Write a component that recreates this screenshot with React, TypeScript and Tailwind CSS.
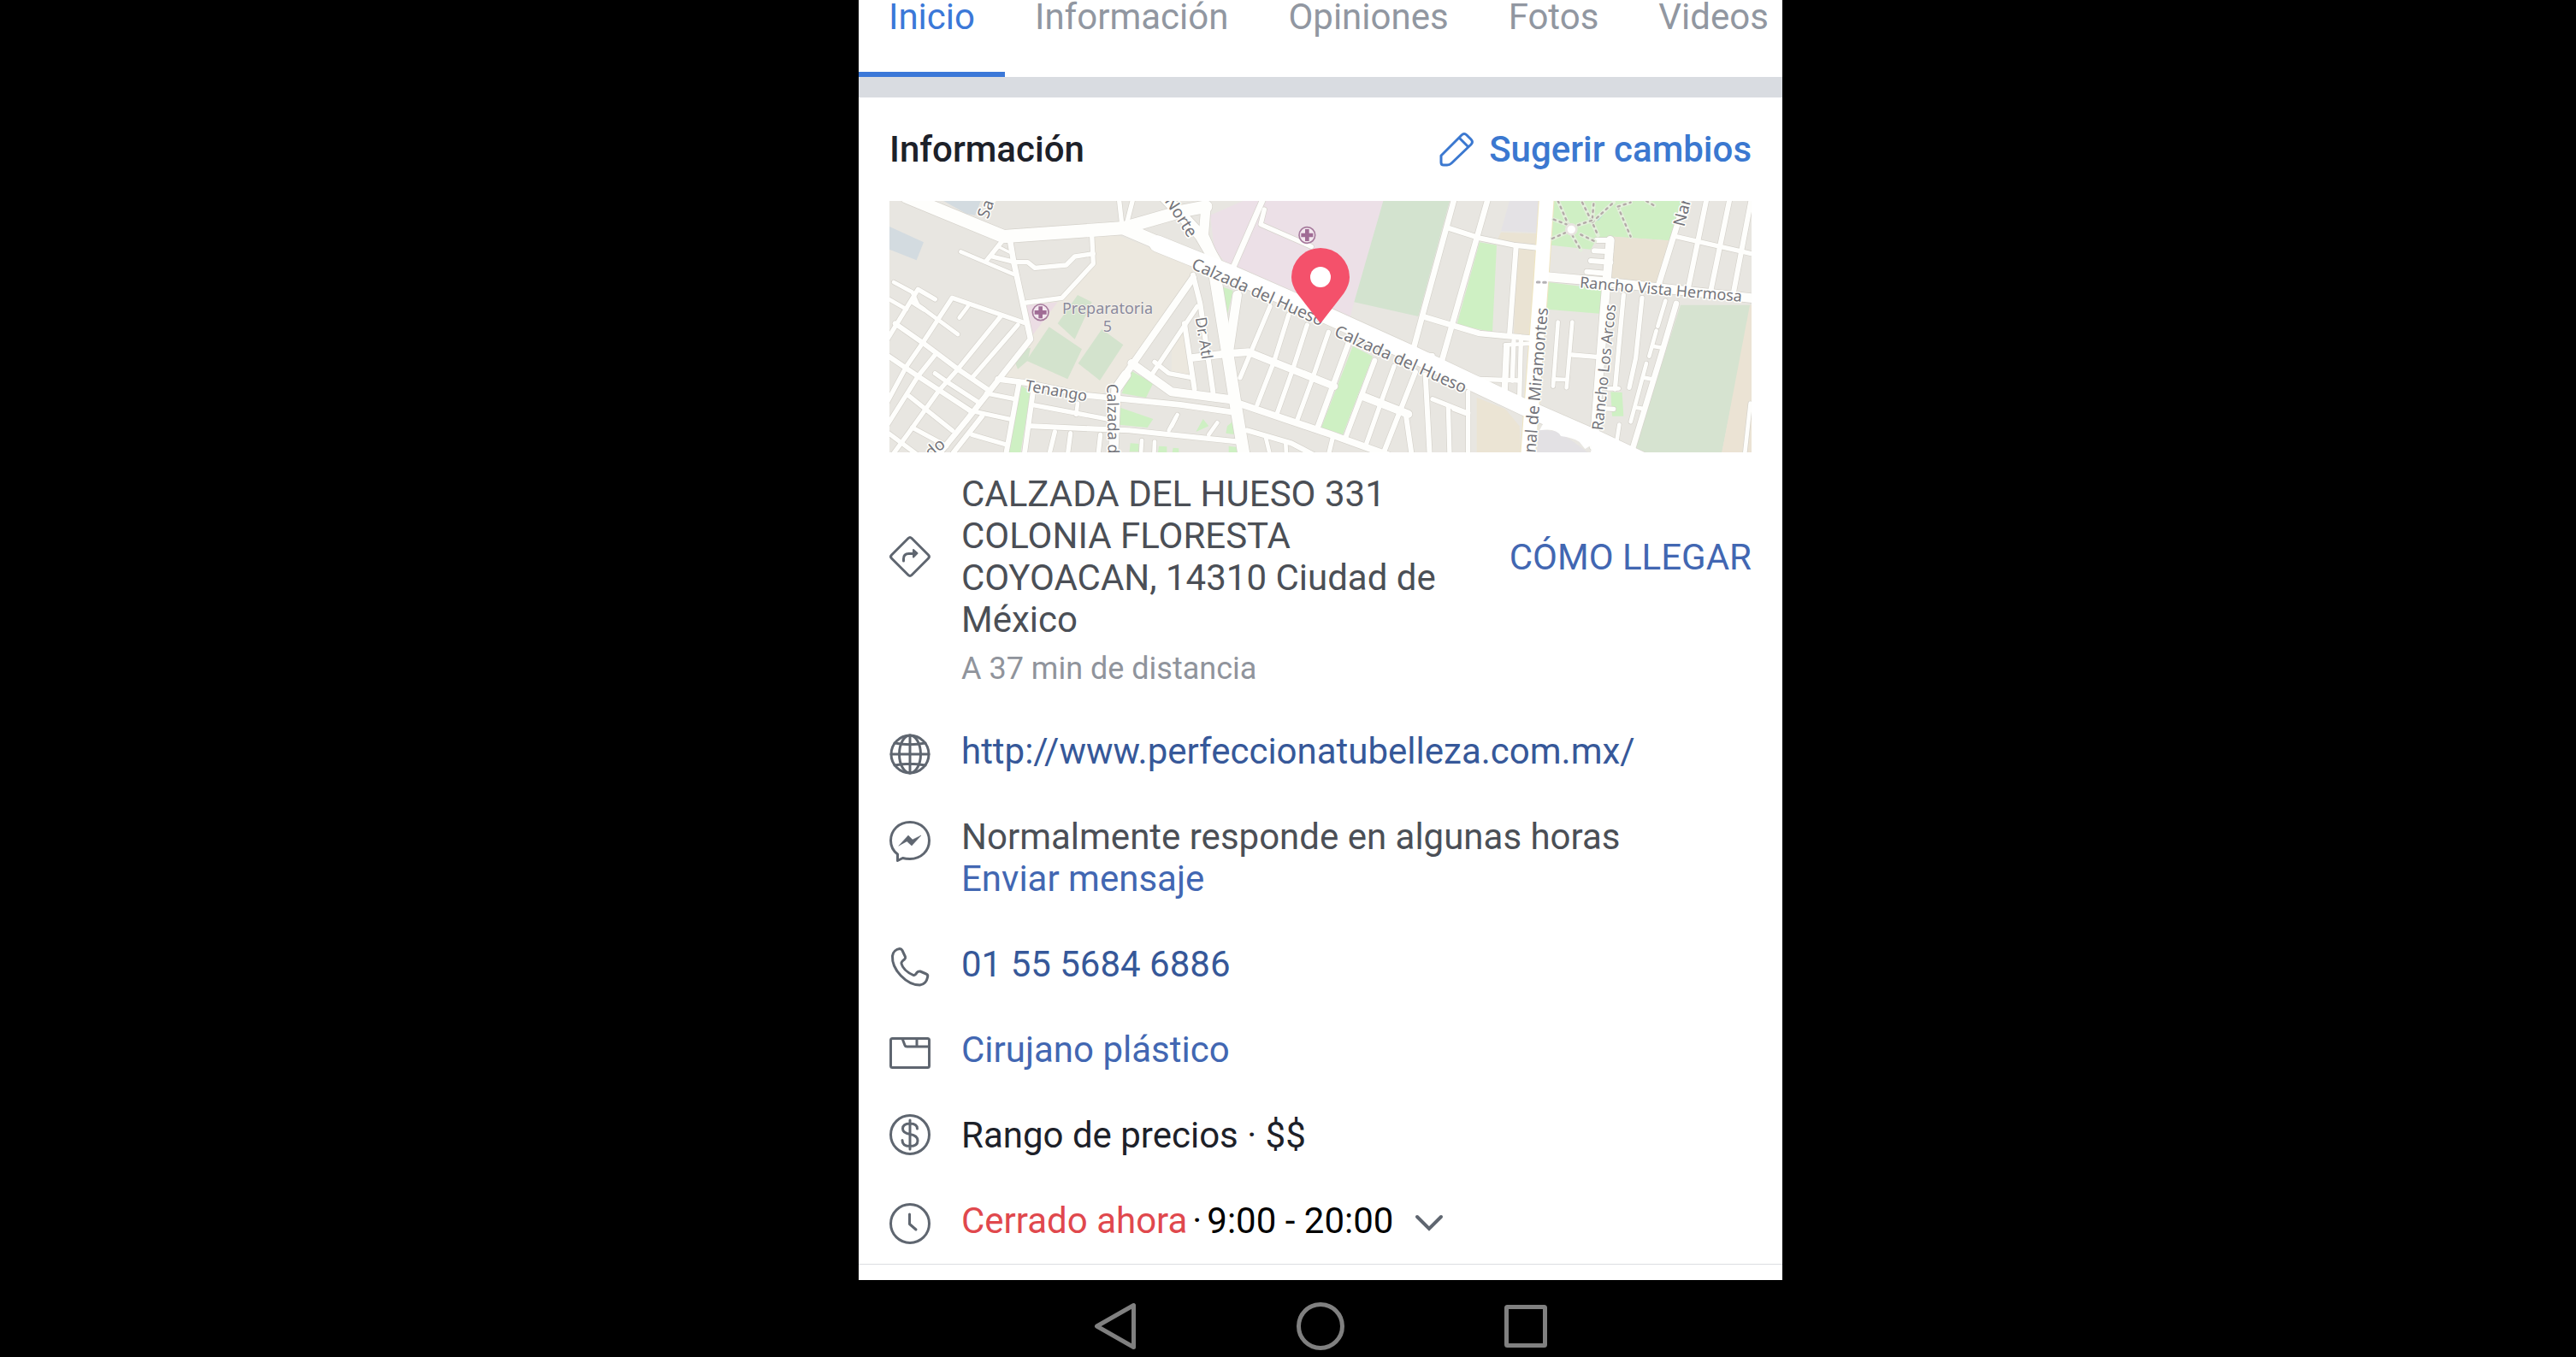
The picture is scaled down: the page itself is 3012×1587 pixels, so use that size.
import type { ReactNode } from "react";

const tabs = ["Inicio", "Información", "Opiniones", "Fotos", "Videos"];

type Road = [string, number];

type Section = {
  x: number;
  areas: [string, string][];
  roads: Road[];
};

// the map is drawn as three tiles, each with its own origin
const sections: Section[] = [
  {
    x: -30,
    areas: [
      ["#ece8df", "830,150 1120,260 850,640 770,715 430,650 530,515 510,395 630,375 745,250 745,150"],
      ["#d3dbe0", "220,30 350,30 330,80 300,75"],
      ["#d3dbe0", "30,120 150,175 125,238 30,200"],
      ["#ecdde4", "510,395 620,385 525,510"],
      ["#d3e3cd", "690,360 740,385 680,515 620,460"],
      ["#d3e3cd", "590,472 705,550 655,655 510,590"],
      ["#d3e3cd", "775,480 850,535 768,660 692,600"],
      ["#d3e3cd", "500,550 525,545 515,590 480,620 470,595"],
      ["#cef0c3", "490,675 525,700 490,912 445,912"],
      ["#cef0c3", "875,625 955,670 930,720 845,705"],
      ["#cef0c3", "840,755 955,795 935,825 835,815"],
      ["#cef0c3", "875,880 905,882 905,910 872,910"],
      ["#cef0c3", "975,890 1003,892 1003,912 972,912"],
      ["#cef0c3", "1025,896 1045,898 1045,912 1022,912"],
    ],
    roads: [
      ["M845,110 L835,20", 16],
      ["M862,110 L885,20", 16],
      ["M450,150 L465,240 L525,515 L300,800 L200,922", 20],
      ["M430,165 L370,240", 16],
      ["M408,188 L455,212", 10],
      ["M390,225 L470,245 L515,245 L540,265 L650,255 L680,225 L745,215", 16],
      ["M740,150 L745,250 L635,370 L510,387", 16],
      ["M280,208 L465,287", 14],
      ["M45,315 L110,350 L130,395 L270,498", 14],
      ["M190,375 L130,340 L20,520", 16],
      ["M20,370 L90,410", 14],
      ["M110,385 L150,410", 16],
      ["M510,460 L250,370 L145,530 L90,610 L20,740", 16],
      ["M305,400 L275,440", 14],
      ["M420,435 L270,620 L200,700 L100,840 L40,922", 16],
      ["M480,465 L320,650", 16],
      ["M190,570 L130,645 L20,820", 16],
      ["M50,460 L150,530 L270,620 L380,695", 18],
      ["M20,570 L130,645 L320,770", 18],
      ["M190,635 L240,670 L340,735", 16],
      ["M100,715 L250,835", 16],
      ["M110,825 L230,890", 16],
      ["M20,840 L130,922", 16],
      ["M410,655 L510,668 L720,712 L1050,745 L1240,772", 20],
      ["M880,600 L1020,700 L1240,728", 30],
      ["M370,705 L470,725", 16],
      ["M310,765 L450,795", 16],
      ["M355,785 L255,912", 18],
      ["M320,850 L440,885", 16],
      ["M485,665 L438,922", 18],
      ["M535,690 L503,922", 18],
      ["M530,745 L820,800", 16],
      ["M530,820 L870,835 L1260,875", 18],
      ["M690,740 L685,780", 14],
      ["M610,840 L590,922", 16],
      ["M665,845 L655,922", 16],
      ["M770,850 L762,922", 16],
      ["M860,640 L825,690 L815,922", 34],
      ["M850,650 L1095,300", 24],
      ["M950,640 L1110,400", 16],
      ["M960,595 L1010,635 L1090,650", 16],
      ["M915,870 L912,922", 14],
      ["M960,875 L958,922", 14],
      ["M1010,835 L1040,780", 14],
      ["M850,125 L1060,65 L1140,50", 44],
      ["M90,15 L430,155 L850,125 L1060,215", 46],
    ],
  },
  {
    x: 990,
    areas: [
      ["#ece8df", "0,228 75,280 0,400"],
      ["#ece8df", "0,520 48,460 70,650 0,640"],
      ["#ece0e7", "250,30 745,30 640,385 620,460 440,390 200,260 150,200 135,80"],
      ["#d3e3cf", "742,30 975,30 865,435 640,385"],
      ["#cef0c3", "175,330 215,345 190,450"],
      ["#cef0c3", "635,540 705,575 600,850 525,825"],
      ["#cef0c3", "110,795 130,820 85,840"],
      ["#cef0c3", "195,820 225,795 225,850 190,845"],
      ["#cef0c3", "200,890 235,895 235,912 200,912"],
    ],
    roads: [
      ["M322,20 L215,265", 20],
      ["M325,60 L312,112 L490,190", 16],
      ["M75,290 L100,390 L145,700", 18],
      ["M45,460 L80,690", 18],
      ["M75,580 L200,565 L270,560 L570,680", 26],
      ["M345,400 L240,650", 16],
      ["M410,430 L360,590 L300,745", 16],
      ["M475,465 L425,620 L370,775", 16],
      ["M550,490 L495,650 L440,800", 16],
      ["M620,530 L510,830", 20],
      ["M235,740 L560,850 L760,922", 24],
      ["M712,590 L610,860", 18],
      ["M780,610 L740,720 L680,890", 16],
      ["M670,715 L830,778", 28],
      ["M855,630 L740,922", 18],
      ["M820,770 L842,922", 18],
      ["M565,860 L550,922", 16],
      ["M992,20 L880,430 L845,560", 20],
      ["M870,570 L915,572 L905,630", 16],
      ["M890,640 L905,922", 18],
      ["M915,725 L1040,775", 16],
      ["M970,750 L975,922", 16],
      ["M265,835 L420,880 L500,922", 18],
      ["M330,860 L345,922", 14],
      ["M400,880 L402,922", 14],
      ["M160,808 L130,850", 14],
      ["M15,790 L0,820", 14],
      ["M-40,0 L100,150 L170,270", 40],
      ["M120,50 L112,150 L165,270", 34],
      ["M230,360 L200,560", 32],
      ["M150,280 L195,560 L225,750 L255,930", 42],
    ],
  },
  {
    x: 2010,
    areas: [
      ["#e4e2e5", "165,30 270,30 262,140 135,135"],
      ["#eae3d3", "135,140 262,145 240,505 180,500 190,190 120,170"],
      ["#cef0c3", "60,175 120,185 105,490 -20,465"],
      ["#cfefc4", "320,30 780,30 745,170 530,155 470,165 450,200 310,185"],
      ["#e9e2d4", "530,155 745,170 690,320 520,300"],
      ["#cef0c3", "300,315 495,340 480,425 296,410"],
      ["#d6e3d0", "765,395 1013,395 910,912 600,912"],
      ["#ebe3d4", "1020,395 1020,912 910,912 1008,395"],
      ["#cef0c3", "520,700 560,702 565,785 525,785"],
      ["#ebe4d4", "50,720 150,760 200,820 205,912 50,912"],
      ["#e3e1e4", "270,830 340,840 440,912 260,912"],
    ],
    roads: [
      ["M90,20 L-75,600", 20],
      ["M-50,125 L60,160 L180,185 L270,195", 18],
      ["M-140,435 L60,495 L240,512", 20],
      ["M188,190 L165,500", 18],
      ["M20,700 L20,922", 16],
      ["M-30,760 L10,775", 16],
      ["M470,168 L520,168", 18],
      ["M462,205 L520,208", 18],
      ["M450,240 L520,245", 18],
      ["M436,278 L510,285", 18],
      ["M518,168 L495,440 L460,890", 30],
      ["M565,360 L535,690", 16],
      ["M510,688 L548,688", 14],
      ["M490,758 L530,760", 16],
      ["M630,370 L608,580 L585,685", 16],
      ["M712,380 L685,470", 14],
      ["M680,485 L655,575", 14],
      ["M645,600 L590,805", 14],
      ["M670,540 L705,546", 14],
      ["M635,650 L670,656", 14],
      ["M610,755 L640,760", 14],
      ["M750,390 L700,560 L595,905", 20],
      ["M550,815 L540,880", 14],
      ["M335,455 L318,680", 14],
      ["M385,455 L365,685", 14],
      ["M320,655 L365,657", 14],
      ["M385,570 L480,578", 16],
      ["M857,20 L790,345", 18],
      ["M938,20 L870,350", 18],
      ["M1012,30 L950,355", 18],
      ["M750,155 L1023,217", 16],
      ["M770,60 L688,325", 20],
      ["M155,540 L148,690", 22],
      ["M180,520 L175,660", 16],
      ["M205,520 L200,720", 16],
      ["M150,535 L240,530", 14],
      ["M-40,650 L60,655 L200,660", 16],
      ["M1010,740 L990,922", 14],
      ["M295,296 L480,312 L1023,372", 32],
    ],
  },
];

// main avenues cross tile borders, so they go last
const avenues: Road[] = [
  ["M940,150 L1200,255 L1530,400 L1840,540 L2050,640 L2230,725 L2460,825 L2640,910", 58],
  ["M2305,-10 L2285,290 L2240,890", 50],
];

const paths = [
  "M335,30 L372,115",
  "M420,35 L455,105 L475,150",
  "M460,40 L455,100",
  "M455,105 L530,35",
  "M545,50 L590,155",
  "M545,50 L590,35",
  "M645,30 L672,46",
  "M385,150 L415,202",
  "M315,162 L360,142",
  "M320,95 L365,112",
  "M405,115 L455,98",
  "M415,148 L465,172",
];

const labels: [string, number, number, number, number][] = [
  ["Sar", 345, 65, -70, 58],
  ["do", 145, 905, -40, 58],
  ["Tenango", 474, 665, 10, 54],
  ["Calzada del Hueso", 763, 642, 89, 54],
  ["Norte", 964, 0, 57, 58],
  ["Dr. Atl", 1073, 410, 81, 54],
  ["Calzada del Hueso", 1056, 236, 24, 58],
  ["Calzada del Hueso", 1557, 472, 24, 58],
  ["Rancho Vista Hermosa", 2420, 304, 5, 54],
  ["Rancho Los Arcos", 2502, 806, -84, 54],
  ["Naranjos", 2788, 92, -76, 58],
];

function Hospital({ x, y }: { x: number; y: number }) {
  return (
    <g>
      <circle cx={x} cy={y} r={28} fill="#f3e8ef" stroke="#a67a9c" strokeWidth={5} />
      <path
        d={`M${x - 7},${y - 21}h14v14h14v14h-14v14h-14v-14h-14v-14h14z`}
        fill="#a06c95"
      />
    </g>
  );
}

function Map() {
  return (
    <svg
      viewBox="0 0 3024 882"
      className="mt-9 block h-auto w-full"
      role="img"
      aria-label="Mapa"
      fontFamily='"Noto Sans", sans-serif'
    >
      <rect width="3024" height="882" fill="#e8e6e1" />
      {sections.map((s) => (
        <g key={s.x} transform={`translate(${s.x} -30)`}>
          {s.areas.map(([fill, points]) => (
            <polygon key={points} points={points} fill={fill} />
          ))}
        </g>
      ))}
      <g fill="none" strokeLinecap="round" strokeLinejoin="round">
        {sections.map((s) => (
          <g key={s.x} transform={`translate(${s.x} -30)`} stroke="#d5d2cb">
            {s.roads.map(([d, w]) => (
              <path key={d} d={d} strokeWidth={w + 4} />
            ))}
          </g>
        ))}
        <path d={avenues[0][0]} strokeWidth={62} stroke="#d8d5ce" />
        <path d={avenues[1][0]} strokeWidth={56} stroke="#efe5c0" />
        {sections.map((s) => (
          <g key={s.x} transform={`translate(${s.x} -30)`} stroke="#fefefc">
            {s.roads.map(([d, w]) => (
              <path key={d} d={d} strokeWidth={w} />
            ))}
          </g>
        ))}
        {avenues.map(([d, w]) => (
          <path key={d} d={d} strokeWidth={w} stroke="#fff" />
        ))}
        <g transform="translate(2010 -30)">
          <path d="M475,95 L525,35" stroke="#a8d8dc" strokeWidth={7} />
          {paths.map((d) => (
            <g key={d}>
              <path d={d} stroke="#e4efdc" strokeWidth={14} />
              <path d={d} stroke="#b3aaa8" strokeWidth={7} strokeDasharray="7 15" />
            </g>
          ))}
          <circle cx={382} cy={130} r={18} fill="#fff" stroke="#e8e4e0" strokeWidth={8} />
          <path d="M262,315h8M284,316h8" stroke="#b5b2b5" strokeWidth={9} />
          <path
            d="M270,835 Q330,825 345,855 Q385,860 410,875 L430,900 L455,885 L450,912 L590,912 L480,850 L300,780Z"
            fill="#fff"
          />
        </g>
      </g>
      <Hospital x={530} y={391} />
      <Hospital x={1465} y={120} />
      <g fill="#74747b" stroke="#fffffc" strokeWidth={9} strokeLinejoin="round" paintOrder="stroke">
        {labels.map(([text, x, y, angle, size]) => (
          <text key={`${text}${x}`} transform={`translate(${x} ${y}) rotate(${angle})`} fontSize={size}>
            {text}
          </text>
        ))}
        <text transform="translate(2310 376) rotate(-85)" fontSize={58} textAnchor="end">
          Canal de Miramontes
        </text>
        <g fill="#8a8a9c" stroke="#f3efe9" strokeWidth={6} fontSize={54} textAnchor="middle">
          <text x={765} y={397}>
            Preparatoria
          </text>
          <text x={765} y={459}>
            5
          </text>
        </g>
      </g>
      <path
        d="M1512,430 L1430,324 Q1410,294 1410,267 A102,102 0 0 1 1614,267 Q1614,294 1594,324 Z"
        fill="#f4516b"
      />
      <circle cx={1512} cy={267} r={36} fill="#fff" />
    </svg>
  );
}

function Icon({ children, viewBox = "0 0 48 48" }: { children: ReactNode; viewBox?: string }) {
  return (
    <svg
      viewBox={viewBox}
      className="size-12 shrink-0 overflow-visible text-[#5f6670]"
      fill="none"
      stroke="currentColor"
      strokeWidth={3}
      strokeLinecap="round"
      strokeLinejoin="round"
      aria-hidden="true"
    >
      {children}
    </svg>
  );
}

function Row({ icon, children }: { icon: ReactNode; children: ReactNode }) {
  return (
    <li className="flex items-start gap-9">
      <div className="-mb-3 mt-1">{icon}</div>
      <div>{children}</div>
    </li>
  );
}

export default function App() {
  return (
    <div className="min-h-screen overflow-hidden bg-black font-['Roboto',sans-serif] text-[42px] leading-[49px]">
      <div className="ml-[calc(100%/3)] max-w-[1080px]">
        <main className="bg-white">
          <nav className="overflow-hidden">
            <div className="-mt-[5px] flex">
              {tabs.map((tab) => (
                <a
                  key={tab}
                  href="#"
                  className={
                    tab === "Inicio"
                      ? "shrink-0 border-b-6 border-[#3b78d8] px-[35px] pb-10 text-[#3b78d8]"
                      : "shrink-0 border-b-6 border-transparent px-[35px] pb-10 text-[#9197a1]"
                  }
                >
                  {tab}
                </a>
              ))}
            </div>
          </nav>
          <div className="h-6 bg-[#d9dce1]" />
          <section className="border-b border-[#dcdee1] px-9 pb-[26px] pt-9">
            <div className="flex items-center justify-between">
              <h1 className="font-medium text-[#1d2129]">Información</h1>
              <a href="#" className="flex items-center gap-4 font-medium text-[#3b78d0]">
                <svg
                  viewBox="0 0 42 42"
                  className="size-[42px]"
                  fill="none"
                  stroke="currentColor"
                  strokeWidth={3}
                  strokeLinejoin="round"
                  aria-hidden="true"
                >
                  <path d="M2,36 V28 L26,4 Q29,1 32,4 L37,9 Q40,12 37,15 L14,37 Q12,39 9,39 H5 Q2,39 2,36 Z" />
                  <path d="M23,7 L34,18" />
                </svg>
                Sugerir cambios
              </a>
            </div>

            <Map />

            <div className="mt-6 flex items-center gap-9">
              <Icon>
                <path d="M22,2.500 Q24,0.500 26,2.500 L45.500,22 Q47.500,24 45.500,26 L26,45.500 Q24,47.500 22,45.500 L2.500,26 Q0.500,24 2.500,22 Z" />
                <path d="M16.500,29 V26.500 Q16.500,20.500 22.500,20.500 H28" />
                <path d="M28,16 L32.500,20 L28,24.500 Z" fill="currentColor" strokeWidth={2} />
              </Icon>
              <p className="w-[600px] text-[#4b4f56]">
                CALZADA DEL HUESO 331 COLONIA FLORESTA COYOACAN, 14310 Ciudad de México
              </p>
              <a href="#" className="ml-auto shrink-0 text-[#4267b2]">
                CÓMO LLEGAR
              </a>
            </div>
            <p className="ml-[84px] mt-3 text-[36px] leading-[42px] text-[#90949c]">A 37 min de distancia</p>

            <ul className="mt-[51px] flex flex-col gap-[51px]">
              <Row
                icon={
                  <Icon>
                    <circle cx="24" cy="24" r="22" />
                    <ellipse cx="24" cy="24" rx="12.500" ry="22" />
                    <path d="M24,2V46M2,24H46M6,11Q24,14.500 42,11M6,37Q24,33.500 42,37" />
                  </Icon>
                }
              >
                <a href="#" className="text-[#365899]">
                  http://www.perfeccionatubelleza.com.mx/
                </a>
              </Row>
              <Row
                icon={
                  <Icon viewBox="0 -2 48 48">
                    <path d="M24,1.500 C37,1.500 46.500,11 46.500,23 C46.500,35 37,44.500 24,44.500 Q19,44.500 15.500,43.500 L9.500,46.500 V39 Q1.500,33 1.500,23 C1.500,11 11,1.500 24,1.500 Z" />
                    <path d="M11,29 L22,17 L27,22 L37,17 L26,29 L20.500,24 Z" fill="currentColor" strokeWidth={0.5} />
                  </Icon>
                }
              >
                <p className="text-[#4b4f56]">Normalmente responde en algunas horas</p>
                <a href="#" className="block text-[#4267b2]">
                  Enviar mensaje
                </a>
              </Row>
              <Row
                icon={
                  <Icon>
                    <path d="M3.500,11 C4,6 8,3 12,2.500 Q14,2.500 15,4.500 L18.500,12 Q19,13.500 17.500,15 Q13.500,18 14,20 Q16,28 28,33.500 Q30,34 32,30.500 Q33.500,28.500 36,29 L43,32 Q45.500,33 44.500,36 Q43,44 35.500,45 C20,45 2.500,27 3.500,11 Z" />
                  </Icon>
                }
              >
                <a href="#" className="text-[#365899]">
                  01 55 5684 6886
                </a>
              </Row>
              <Row
                icon={
                  <Icon>
                    <rect x="1.500" y="7.500" width="45" height="34" rx="2" />
                    <path d="M15,7.500 L18,15.500 Q18.500,17 20.500,17 H46M32,7.500V17" />
                  </Icon>
                }
              >
                <a href="#" className="text-[#4267b2]">
                  Cirujano plástico
                </a>
              </Row>
              <Row
                icon={
                  <Icon viewBox="0 4 48 48">
                    <circle cx="24" cy="24" r="22.500" />
                    <path d="M24,7V41M32.500,17 Q32.500,11 24,11 Q15.500,11 15.500,17 Q15.500,22 24,23.500 Q33,25 33,31 Q33,37.500 24,37.500 Q15,37.500 15,30.500" />
                  </Icon>
                }
              >
                <p className="text-[#1d2129]">Rango de precios · $$</p>
              </Row>
              <Row
                icon={
                  <Icon>
                    <circle cx="24" cy="24" r="22.500" />
                    <path d="M23.500,13V24.500L31,31" />
                  </Icon>
                }
              >
                <button type="button" className="flex items-center text-black">
                  <span className="text-[#e0484d]">Cerrado ahora</span>
                  <span className="px-1.5">·</span>
                  <span>9:00 - 20:00</span>
                  <svg
                    viewBox="0 0 36 20"
                    className="ml-6 mt-1 h-5 w-9"
                    fill="none"
                    stroke="#5f6670"
                    strokeWidth={4}
                    strokeLinecap="round"
                    aria-hidden="true"
                  >
                    <path d="M4,3 L18,17 L32,3" />
                  </svg>
                </button>
              </Row>
            </ul>
          </section>
          <div className="h-[18px]" />
        </main>

        <nav className="flex justify-center pb-1.5 pt-6 text-[#808080]">
          <button type="button" aria-label="Atrás" className="flex w-60 justify-center">
            <svg viewBox="0 0 60 60" className="size-15" fill="none" stroke="currentColor" strokeWidth={5} strokeLinejoin="round">
              <path d="M8.500,30 L51.500,5.500 V54.500 Z" />
            </svg>
          </button>
          <button type="button" aria-label="Inicio" className="flex w-60 justify-center">
            <svg viewBox="0 0 60 60" className="size-15" fill="none" stroke="currentColor" strokeWidth={5}>
              <circle cx="30" cy="30" r="25.500" />
            </svg>
          </button>
          <button type="button" aria-label="Recientes" className="flex w-60 justify-center">
            <svg viewBox="0 0 60 60" className="size-15" fill="none" stroke="currentColor" strokeWidth={5} strokeLinejoin="round">
              <rect x="7.500" y="7.500" width="45" height="45" rx="1" />
            </svg>
          </button>
        </nav>
      </div>
    </div>
  );
}
